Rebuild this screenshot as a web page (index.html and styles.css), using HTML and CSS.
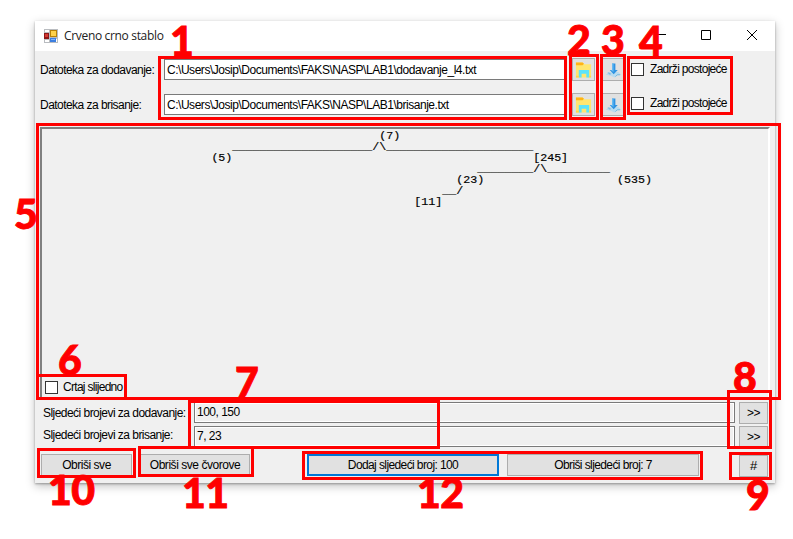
FILE: index.html
```
<!DOCTYPE html>
<html lang="hr">
<head>
<meta charset="utf-8">
<title>Crveno crno stablo</title>
<link rel="stylesheet" href="styles.css">
</head>
<body>
<svg width="0" height="0" class="defs">
  <symbol id="folder" viewBox="0 0 18 18">
    <path d="M1 1h7l2 2h7v14H1z" fill="#ffe670"/>
    <path d="M1 1h7l1.500 1.500L8 4H1z" fill="#ffb316"/>
    <path d="M4 17V9h11v8h-3v-4H7v4z" fill="#5de3fa"/>
    <path d="M1 15h3v2H1zM15 15h2v2h-2z" fill="#ffd84a"/>
  </symbol>
  <symbol id="load" viewBox="0 0 18 18">
    <path d="M4 11l-3 3 5 1 4 2 3-2 4-1-3-3z" fill="#b9dcf0"/>
    <path d="M3 12l3 1-1 1M11 16l2-2 3 0" fill="none" stroke="#78b8dd"/>
    <path d="M7.500 2h3.500v7h2.500l-4.300 4.500-4.200-4.500h2.500z" fill="#2f93e2"/>
    <path d="M7.500 2h1.500v9l-3-2h1.500z" fill="#66bdf5"/>
  </symbol>
</svg>
<main class="window">
  <header class="titlebar">
    <svg class="app-icon" width="14" height="14" viewBox="0 0 14 14">
      <path d="M0 0h14v14H0z" fill="#b9bcc0"/>
      <path d="M1 1h4v2H1zM1 11h4v2H1zM12 10h1v3h-1z" fill="#fff"/>
      <path d="M0 4h5v6H0z" fill="#8d1717"/><path d="M1 5h3v3H1z" fill="#d53a32"/>
      <path d="M6 1h7v7H6z" fill="#b98206"/><path d="M7 2h5v5H7z" fill="#ffd24a"/>
      <path d="M6 9h6v4H6z" fill="#3c7fe0"/><path d="M7 10h4v1H7z" fill="#80b4ff"/>
    </svg>
    <h1>Crveno crno stablo</h1>
    <svg class="controls" width="100" height="12" viewBox="0 0 100 12" fill="none" stroke="#000">
      <path d="M0 5.500h9M44.500 1.500h9v9h-9zM90 1l10 10M100 1l-10 10"/>
    </svg>
  </header>

  <section class="files">
    <div class="file-row">
      <label>Datoteka za dodavanje:</label>
      <div class="field path">C:\Users\Josip\Documents\FAKS\NASP\LAB1\dodavanje_l4.txt</div>
      <button class="icon-btn"><svg><use href="#folder"/></svg></button>
      <button class="icon-btn"><svg><use href="#load"/></svg></button>
      <div class="check"><i></i><span>Zadrži postojeće</span></div>
    </div>
    <div class="file-row second">
      <label>Datoteka za brisanje:</label>
      <div class="field path">C:\Users\Josip\Documents\FAKS\NASP\LAB1\brisanje.txt</div>
      <button class="icon-btn"><svg><use href="#folder"/></svg></button>
      <button class="icon-btn"><svg><use href="#load"/></svg></button>
      <div class="check"><i></i><span>Zadrži postojeće</span></div>
    </div>
  </section>

  <section class="canvas">
<pre>                                                (7)
                           ____________________/\_____________________
                        (5)                                           [245]
                                                              ________/\_________
                                                           (23)                   (535)
                                                         __/
                                                     [11]</pre>
    <div class="check"><i></i><span>Crtaj slijedno</span></div>
  </section>

  <section class="queue">
    <div class="queue-row">
      <label>Sljedeći brojevi za dodavanje:</label>
      <div class="field readonly">100, 150</div>
      <button>&gt;&gt;</button>
    </div>
    <div class="queue-row">
      <label>Sljedeći brojevi za brisanje:</label>
      <div class="field readonly">7, 23</div>
      <button>&gt;&gt;</button>
    </div>
  </section>

  <footer class="actions">
    <button class="clear">Obriši sve</button>
    <button class="clear-nodes">Obriši sve čvorove</button>
    <button class="step focused">Dodaj sljedeći broj: 100</button>
    <button class="step">Obriši sljedeći broj: 7</button>
    <button class="hash">#</button>
  </footer>
</main>

<div class="box b1"></div><div class="box b2"></div><div class="box b3"></div>
<div class="box b4"></div><div class="box b5"></div><div class="box b6"></div>
<div class="box b7"></div><div class="box b8"></div><div class="box b9"></div>
<div class="box b10"></div><div class="box b11"></div><div class="box b12"></div>
<b class="num n1">1</b><b class="num n2">2</b><b class="num n3">3</b>
<b class="num n4">4</b><b class="num n5">5</b><b class="num n6">6</b>
<b class="num n7">7</b><b class="num n8">8</b><b class="num n9">9</b>
<b class="num n10">10</b><b class="num n11">11</b><b class="num n12">12</b>
</body>
</html>
```
FILE: styles.css
```
* { box-sizing: border-box; }
body {
  position: relative;
  width: 793px;
  height: 539px;
  margin: 0;
  padding: 21px 0 0 35px;
  overflow: hidden;
  background: #fff;
  color: #000;
  font: 12px/14px "Liberation Sans", Arial, sans-serif;
  letter-spacing: -0.54px;
}
.defs { position: absolute; }

.window {
  width: 740px;
  height: 462px;
  background: #f0f0f0;
  box-shadow: 0 1px 2px rgba(0, 0, 0, .3), 0 3px 9px rgba(0, 0, 0, .25);
}
.titlebar {
  display: flex;
  align-items: center;
  height: 30px;
  padding: 0 18px 0 9px;
  background: #fff;
}
h1 {
  flex: 1;
  margin: 0 0 0 6px;
  color: #222;
  font: 12px/16px "Open Sans", sans-serif;
  letter-spacing: -0.33px;
}
.controls { margin-top: -2px; }

.files { height: 76px; padding: 7px 0 0 5px; }
.file-row { display: flex; align-items: flex-start; height: 35px; }
.file-row label { width: 124px; margin-top: 5px; }
.field {
  height: 21px;
  padding: 2px 2px;
  border: 1px solid #7a7a7a;
  background: #fff;
  white-space: nowrap;
}
.path { width: 402px; margin: 1px 6px 0 0; padding-top: 3px; letter-spacing: -0.47px; }
button {
  padding: 0;
  border: 1px solid #adadad;
  background: #e1e1e1;
  color: #000;
  font: inherit;
  letter-spacing: -0.46px;
}
.icon-btn { display: flex; width: 23px; height: 23px; margin-right: 7px; padding: 2px; }
.icon-btn svg { width: 18px; height: 18px; }
.check { display: flex; align-items: center; gap: 6px; height: 14px; letter-spacing: -0.7px; }
.check i { width: 13px; height: 13px; border: 1px solid #333; background: #fff; }
.file-row .check { margin: 4px 0 0 -1px; }
.file-row.second .check { margin-top: 3px; }
.canvas .check { gap: 5px; }

.canvas {
  display: flex;
  flex-direction: column;
  justify-content: space-between;
  width: 730px;
  height: 272px;
  margin-left: 5px;
  padding: 2px 0 3px 3px;
  border: 2px solid;
  border-color: #808080 #fff #fff #808080;
}
pre {
  margin: 0 0 0 -1.500px;
  font: 11.667px/11px "Liberation Mono", monospace;
  letter-spacing: 0;
  -webkit-text-stroke: .2px #000;
}

.queue { padding: 3px 0 0 8px; }
.queue-row { display: flex; height: 24px; }
.queue-row label { width: 151px; margin-top: 4px; }
.queue-row + .queue-row label { margin-top: 2px; }
.readonly { width: 541px; background: #f0f0f0; box-shadow: inset 0 0 0 1px #fff; letter-spacing: -0.5px; }
.queue-row button { width: 29px; height: 22px; margin-left: 4px; }

.actions { display: flex; padding: 4px 0 0 6px; }
.actions button { height: 22px; }
.clear { width: 91px; }
.clear-nodes { width: 110px; margin: 0 57px 0 8px; }
.step { width: 192px; margin-right: 8px; }
.actions .step { letter-spacing: -0.6px; }
.focused.step { border: 2px solid #0078d7; }
.actions .hash { width: 29px; margin: 1px 0 0 32px; font-size: 13px; }

.box { position: absolute; border: 3px solid #f00; }
.b1 { left: 158px; top: 56px; width: 409px; height: 64px; }
.b2 { left: 569px; top: 54px; width: 30px; height: 66px; }
.b3 { left: 600px; top: 54px; width: 26px; height: 66px; }
.b4 { left: 627px; top: 56px; width: 106px; height: 59px; }
.b5 { left: 36px; top: 123px; width: 745px; height: 277px; }
.b6 { left: 36px; top: 374px; width: 91px; height: 26px; }
.b7 { left: 188px; top: 400px; width: 252px; height: 49px; }
.b8 { left: 727px; top: 390px; width: 45px; height: 59px; }
.b9 { left: 729px; top: 452px; width: 43px; height: 28px; }
.b10 { left: 37px; top: 448px; width: 99px; height: 30px; }
.b11 { left: 138px; top: 446px; width: 116px; height: 31px; }
.b12 { left: 302px; top: 451px; width: 401px; height: 29px; }

.num {
  position: absolute;
  color: #f00;
  font: 900 41px/40px Lato, sans-serif;
  letter-spacing: -0.5px;
  -webkit-text-stroke: .9px #f00;
}
.n1 { left: 170px; top: 21px; }
.n2 { left: 567px; top: 20px; }
.n3 { left: 601px; top: 20px; }
.n4 { left: 639px; top: 21px; }
.n5 { left: 14px; top: 194px; }
.n6 { left: 58px; top: 340px; }
.n7 { left: 235px; top: 362px; }
.n8 { left: 733px; top: 357px; }
.n9 { left: 746px; top: 475px; }
.n10 { left: 48px; top: 470px; }
.n11 { left: 182px; top: 473px; }
.n12 { left: 417px; top: 473px; }
```
